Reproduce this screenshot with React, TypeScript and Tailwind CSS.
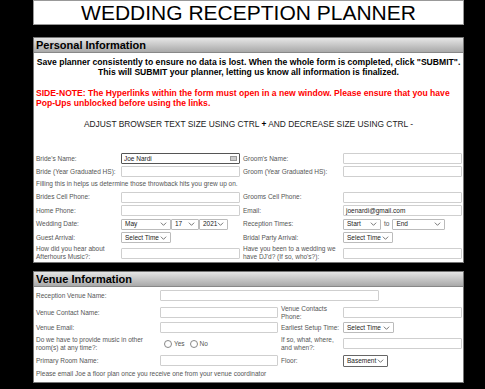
import React from "react";

const font = "font-['Liberation_Sans',Arial,sans-serif]";

const Chevron = () => (
  <svg viewBox="0 0 10 6" className="h-[4px] w-[7px] shrink-0" fill="none" stroke="#333" strokeWidth="1">
    <path d="M1 1l4 4 4-4" />
  </svg>
);

const Input = ({ w, value, focused }: { w: string; value?: string; focused?: boolean }) => (
  <div
    className={`${w} h-[11px] shrink-0 flex items-center justify-between px-[2px] rounded-[1px] bg-white border ${
      focused ? "border-[#555]" : "border-[#cfcfcf]"
    } text-[6.5px] text-[#222] whitespace-nowrap`}
  >
    <span>{value}</span>
    {focused && <span className="w-[7px] h-[5px] bg-[#ccc] border border-[#999]" />}
  </div>
);

const Select = ({ w, value }: { w: string; value: string }) => (
  <div className={`${w} h-[11px] shrink-0 flex items-center justify-between px-[3px] bg-white border border-[#bbb] rounded-[1px] text-[6.5px] text-[#222] whitespace-nowrap`}>
    <span>{value}</span>
    <Chevron />
  </div>
);

const Label = ({ children, w }: { children: React.ReactNode; w: string }) => (
  <div className={`${w} text-[6.5px] leading-[8px] text-[#555] shrink-0 whitespace-nowrap`}>{children}</div>
);

const Radio = () => <span className="inline-block w-[8px] h-[8px] rounded-full border border-[#888] bg-white" />;

const Header = ({ title }: { title: string }) => (
  <div className="h-[15px] px-[2px] flex items-center bg-gradient-to-b from-[#e6e6e6] to-[#a9a9a9] border-b border-[#888] text-[11px] font-bold text-black leading-none">
    {title}
  </div>
);

export default function App() {
  return (
    <div className={`${font} bg-black w-[485px] h-[389px] overflow-hidden`}>
      <div className="ml-[33px] w-[431px] h-[25px] bg-white border border-[#999] flex items-center justify-center text-[21px] leading-none text-black">
        WEDDING RECEPTION PLANNER
      </div>

      <div className="ml-[33px] mt-[12px] w-[431px] bg-white border border-[#777]">
        <Header title="Personal Information" />
        <div className="pt-[4px] text-center text-[8.6px] leading-[10px] font-bold text-black whitespace-nowrap">
          <div>Save planner consistently to ensure no data is lost. When the whole form is completed, click "SUBMIT".</div>
          <div>This will SUBMIT your planner, letting us know all information is finalized.</div>
        </div>
        <div className="mt-[11px] px-[2px] text-[8.6px] leading-[10px] font-bold text-[#f00] whitespace-nowrap">
          <div>SIDE-NOTE: The Hyperlinks within the form must open in a new window. Please ensure that you have</div>
          <div>Pop-Ups unblocked before using the links.</div>
        </div>
        <div className="mt-[11px] text-center text-[8.4px] leading-[10px] text-[#222] whitespace-nowrap">
          ADJUST BROWSER TEXT SIZE USING CTRL <b className="text-black">+</b> AND DECREASE SIZE USING CTRL -
        </div>

        <div className="mt-[23px] pl-[2px] flex flex-col">
          <div className="h-[13px] flex items-center">
            <Label w="w-[85px]">Bride's Name:</Label>
            <Input w="w-[119px]" value="Joe Nardi" focused />
            <div className="w-[3px]" />
            <Label w="w-[100px]">Groom's Name:</Label>
            <Input w="w-[119px]" />
          </div>
          <div className="h-[13px] flex items-center">
            <Label w="w-[85px]">Bride (Year Graduated HS):</Label>
            <Input w="w-[119px]" />
            <div className="w-[3px]" />
            <Label w="w-[100px]">Groom (Year Graduated HS):</Label>
            <Input w="w-[119px]" />
          </div>
          <div className="h-[12px] flex items-center text-[6.5px] text-[#555] whitespace-nowrap">
            Filling this in helps us determine those throwback hits you grew up on.
          </div>
          <div className="h-[14px] flex items-center">
            <Label w="w-[85px]">Brides Cell Phone:</Label>
            <Input w="w-[119px]" />
            <div className="w-[3px]" />
            <Label w="w-[100px]">Grooms Cell Phone:</Label>
            <Input w="w-[119px]" />
          </div>
          <div className="h-[13px] flex items-center">
            <Label w="w-[85px]">Home Phone:</Label>
            <Input w="w-[119px]" />
            <div className="w-[3px]" />
            <Label w="w-[100px]">Email:</Label>
            <Input w="w-[119px]" value="joenardi@gmail.com" />
          </div>
          <div className="h-[14px] flex items-center">
            <Label w="w-[85px]">Wedding Date:</Label>
            <div className="w-[119px] flex">
              <Select w="w-[50px]" value="May" />
              <Select w="w-[28px]" value="17" />
              <Select w="w-[29px]" value="2021" />
            </div>
            <div className="w-[3px]" />
            <Label w="w-[100px]">Reception Times:</Label>
            <div className="flex items-center">
              <Select w="w-[38px]" value="Start" />
              <span className="mx-[3px] text-[6.5px] text-[#555]">to</span>
              <Select w="w-[53px]" value="End" />
            </div>
          </div>
          <div className="h-[13px] flex items-center">
            <Label w="w-[85px]">Guest Arrival:</Label>
            <div className="w-[119px]">
              <Select w="w-[50px]" value="Select Time" />
            </div>
            <div className="w-[3px]" />
            <Label w="w-[100px]">Bridal Party Arrival:</Label>
            <Select w="w-[50px]" value="Select Time" />
          </div>
          <div className="h-[18px] flex items-center">
            <Label w="w-[85px]">
              How did you hear about
              <br />
              Afterhours Music?:
            </Label>
            <Input w="w-[119px]" />
            <div className="w-[3px]" />
            <Label w="w-[100px]">
              Have you been to a wedding we
              <br />
              have DJ'd? (If so, who's?):
            </Label>
            <Input w="w-[119px]" />
          </div>
        </div>
      </div>

      <div className="ml-[33px] mt-[8px] w-[431px] bg-white border border-[#777]">
        <Header title="Venue Information" />
        <div className="pl-[2px] pb-[2px] flex flex-col">
          <div className="h-[17px] flex items-center">
            <Label w="w-[124px]">Reception Venue Name:</Label>
            <Input w="w-[219px]" />
          </div>
          <div className="h-[17px] flex items-center">
            <Label w="w-[124px]">Venue Contact Name:</Label>
            <Input w="w-[118px]" />
            <div className="w-[3px]" />
            <Label w="w-[62px]">
              Venue Contacts
              <br />
              Phone:
            </Label>
            <Input w="w-[119px]" />
          </div>
          <div className="h-[13px] flex items-center">
            <Label w="w-[124px]">Venue Email:</Label>
            <Input w="w-[118px]" />
            <div className="w-[3px]" />
            <Label w="w-[62px]">Earliest Setup Time:</Label>
            <Select w="w-[51px]" value="Select Time" />
          </div>
          <div className="h-[19px] flex items-center">
            <Label w="w-[124px]">
              Do we have to provide music in other
              <br />
              room(s) at any time?:
            </Label>
            <div className="w-[118px] pl-[4px] flex items-center gap-[2px] text-[6.5px] text-[#555]">
              <Radio />
              <span className="mr-[3px]">Yes</span>
              <Radio />
              <span>No</span>
            </div>
            <div className="w-[3px]" />
            <Label w="w-[62px]">
              If so, what, where,
              <br />
              and when?:
            </Label>
            <Input w="w-[119px]" />
          </div>
          <div className="h-[15px] flex items-center">
            <Label w="w-[124px]">Primary Room Name:</Label>
            <Input w="w-[118px]" />
            <div className="w-[3px]" />
            <Label w="w-[62px]">Floor:</Label>
            <div className="w-[45px] h-[12px] flex items-center justify-between px-[3px] bg-white border border-[#666] rounded-[1px] text-[6.5px] text-[#222] whitespace-nowrap">
              <span>Basement</span>
              <Chevron />
            </div>
          </div>
          <div className="h-[12px] flex items-center text-[6.5px] text-[#555] whitespace-nowrap">
            Please email Joe a floor plan once you receive one from your venue coordinator
          </div>
        </div>
      </div>
    </div>
  );
}
